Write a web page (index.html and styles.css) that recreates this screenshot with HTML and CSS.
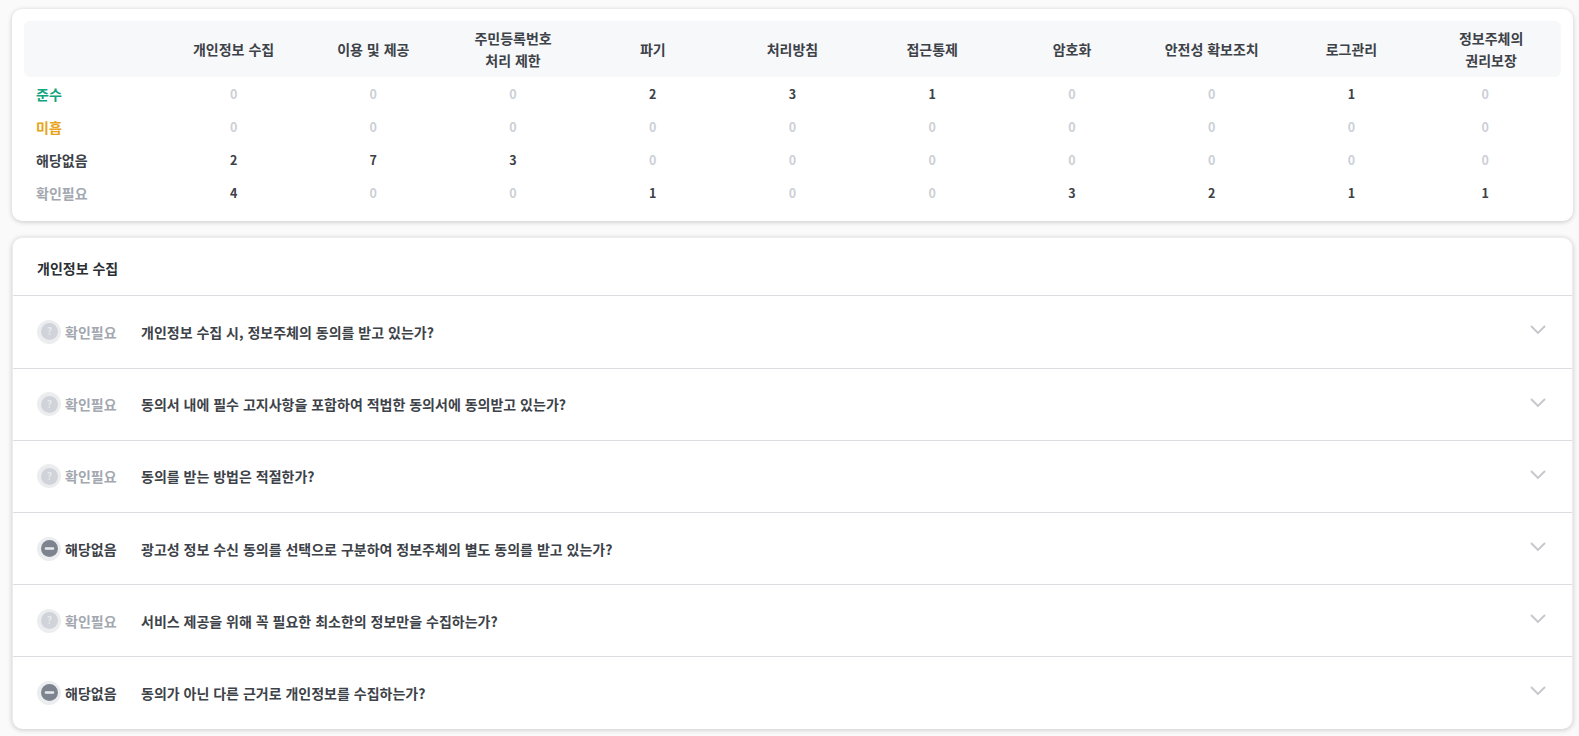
FILE: index.html
```html
<!DOCTYPE html>
<html lang="ko">
<head>
    <meta charset="UTF-8">
    <title>개인정보 점검 결과</title>
    <link rel="stylesheet" href="styles.css">
</head>
<body>

    <section class="card summary">
        <div class="summary-row summary-head">
            <div></div>
            <div>개인정보 수집</div>
            <div>이용 및 제공</div>
            <div>주민등록번호<br>처리 제한</div>
            <div>파기</div>
            <div>처리방침</div>
            <div>접근통제</div>
            <div>암호화</div>
            <div>안전성 확보조치</div>
            <div>로그관리</div>
            <div>정보주체의<br>권리보장</div>
        </div>
        <div class="summary-row">
            <div class="label pass">준수</div>
            <div class="zero">0</div><div class="zero">0</div><div class="zero">0</div>
            <div>2</div><div>3</div><div>1</div>
            <div class="zero">0</div><div class="zero">0</div>
            <div>1</div>
            <div class="zero">0</div>
        </div>
        <div class="summary-row">
            <div class="label weak">미흡</div>
            <div class="zero">0</div><div class="zero">0</div><div class="zero">0</div><div class="zero">0</div><div class="zero">0</div>
            <div class="zero">0</div><div class="zero">0</div><div class="zero">0</div><div class="zero">0</div><div class="zero">0</div>
        </div>
        <div class="summary-row">
            <div class="label">해당없음</div>
            <div>2</div><div>7</div><div>3</div>
            <div class="zero">0</div><div class="zero">0</div><div class="zero">0</div><div class="zero">0</div>
            <div class="zero">0</div><div class="zero">0</div><div class="zero">0</div>
        </div>
        <div class="summary-row">
            <div class="label check">확인필요</div>
            <div>4</div>
            <div class="zero">0</div><div class="zero">0</div>
            <div>1</div>
            <div class="zero">0</div><div class="zero">0</div>
            <div>3</div><div>2</div><div>1</div><div>1</div>
        </div>
    </section>

    <section class="card detail">
        <h2 class="detail-title">개인정보 수집</h2>

        <div class="item">
            <span class="badge"><svg class="badge-dot" viewBox="0 0 18 18"><circle cx="9" cy="9" r="9" fill="#d0d3d9"/><text x="9" y="13" text-anchor="middle" class="mark">?</text></svg></span>
            <span class="status check">확인필요</span>
            <span class="question">개인정보 수집 시, 정보주체의 동의를 받고 있는가?</span>
            <svg class="chevron" viewBox="0 0 16 10"><path d="M1 1l7 7 7-7"/></svg>
        </div>
        <div class="item">
            <span class="badge"><svg class="badge-dot" viewBox="0 0 18 18"><circle cx="9" cy="9" r="9" fill="#d0d3d9"/><text x="9" y="13" text-anchor="middle" class="mark">?</text></svg></span>
            <span class="status check">확인필요</span>
            <span class="question">동의서 내에 필수 고지사항을 포함하여 적법한 동의서에 동의받고 있는가?</span>
            <svg class="chevron" viewBox="0 0 16 10"><path d="M1 1l7 7 7-7"/></svg>
        </div>
        <div class="item">
            <span class="badge"><svg class="badge-dot" viewBox="0 0 18 18"><circle cx="9" cy="9" r="9" fill="#d0d3d9"/><text x="9" y="13" text-anchor="middle" class="mark">?</text></svg></span>
            <span class="status check">확인필요</span>
            <span class="question">동의를 받는 방법은 적절한가?</span>
            <svg class="chevron" viewBox="0 0 16 10"><path d="M1 1l7 7 7-7"/></svg>
        </div>
        <div class="item">
            <span class="badge"><svg class="badge-dot" viewBox="0 0 18 18"><circle cx="9" cy="9" r="9" fill="#7d8490"/><rect x="4" y="7.8" width="10" height="2.4" rx="1" fill="#e8e9ec"/></svg></span>
            <span class="status">해당없음</span>
            <span class="question">광고성 정보 수신 동의를 선택으로 구분하여 정보주체의 별도 동의를 받고 있는가?</span>
            <svg class="chevron" viewBox="0 0 16 10"><path d="M1 1l7 7 7-7"/></svg>
        </div>
        <div class="item">
            <span class="badge"><svg class="badge-dot" viewBox="0 0 18 18"><circle cx="9" cy="9" r="9" fill="#d0d3d9"/><text x="9" y="13" text-anchor="middle" class="mark">?</text></svg></span>
            <span class="status check">확인필요</span>
            <span class="question">서비스 제공을 위해 꼭 필요한 최소한의 정보만을 수집하는가?</span>
            <svg class="chevron" viewBox="0 0 16 10"><path d="M1 1l7 7 7-7"/></svg>
        </div>
        <div class="item">
            <span class="badge"><svg class="badge-dot" viewBox="0 0 18 18"><circle cx="9" cy="9" r="9" fill="#7d8490"/><rect x="4" y="7.8" width="10" height="2.4" rx="1" fill="#e8e9ec"/></svg></span>
            <span class="status">해당없음</span>
            <span class="question">동의가 아닌 다른 근거로 개인정보를 수집하는가?</span>
            <svg class="chevron" viewBox="0 0 16 10"><path d="M1 1l7 7 7-7"/></svg>
        </div>
    </section>

</body>
</html>
```

FILE: styles.css
```css
/* Global Styles */
body {
    font-family: "Noto Sans CJK KR", "Noto Sans", sans-serif;
    margin: 0;
    padding: 9px 6px 6px 12px;
    background-color: #fafafa;
    color: #3d4248;
    font-size: 14px;
    font-weight: 700;
}

.card {
    background-color: white;
    border-radius: 10px;
    box-shadow: 0 1px 5px rgba(0, 0, 0, 0.2);
}

/* Summary table */
.summary {
    padding: 12px 12px 11px;
    height: 212px;
    box-sizing: border-box;
    margin-bottom: 16px;
}

.summary-row {
    display: grid;
    grid-template-columns: repeat(11, 1fr);
    align-items: center;
    text-align: center;
    height: 33px;
    font-size: 12.5px;
}

/* last column of the value rows sits a little left of its heading */
.summary-row > div:last-child {
    padding-right: 12px;
}

.summary-head {
    height: 56px;
    background-color: #f7f8fa;
    border-radius: 6px;
    font-size: 14px;
    line-height: 22px;
}

.summary-head > div:last-child {
    padding-right: 0;
}

.summary .label {
    text-align: left;
    padding-left: 12px;
    font-size: 14px;
}

.summary .pass {
    color: #12a37f;
}

.summary .weak {
    color: #e8a317;
}

.check {
    color: #a3a8b0;
}

.zero {
    color: #ccd0d6;
}

/* Checklist */
.detail {
    border: 1px solid #ececee;
    border-bottom-width: 0;
}

.detail-title {
    margin: 0;
    padding-left: 24px;
    height: 57.4px;
    line-height: 60px;
    font-size: 14px;
    color: #2b2f33;
}

.item {
    display: flex;
    align-items: center;
    height: 71.2px;
    padding: 0 26px 0 24px;
    border-top: 1px solid #dcdde0;
}

.badge {
    display: flex;
    align-items: center;
    justify-content: center;
    width: 24px;
    height: 24px;
    border-radius: 50%;
    background-color: #ecedef;
    margin-right: 4px;
}

.badge-dot {
    width: 17px;
    height: 17px;
}

.mark {
    font-size: 11px;
    font-weight: 700;
    fill: #e8e9ec;
}

.status {
    width: 76px;
    flex: none;
}

.question {
    flex: 1;
    font-size: 14px;
}

.chevron {
    width: 16px;
    height: 10px;
    fill: none;
    stroke: #c3c6cc;
    stroke-width: 1.8;
    margin-top: -3px;
}
```
